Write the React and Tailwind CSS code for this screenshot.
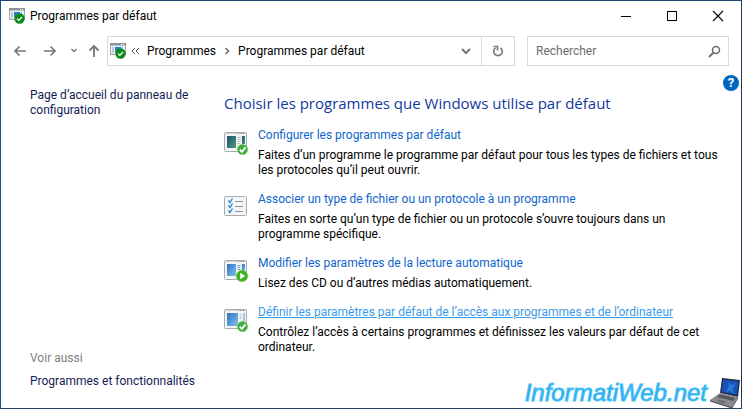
const tasks = [
  {
    icon: 'defaults',
    title: 'Configurer les programmes par défaut',
    lines: [
      'Faites d’un programme le programme par défaut pour tous les types de fichiers et tous',
      'les protocoles qu’il peut ouvrir.',
    ],
  },
  {
    icon: 'associate',
    title: 'Associer un type de fichier ou un protocole à un programme',
    lines: [
      'Faites en sorte qu’un type de fichier ou un protocole s’ouvre toujours dans un',
      'programme spécifique.',
    ],
  },
  {
    icon: 'autoplay',
    title: 'Modifier les paramètres de la lecture automatique',
    lines: ['Lisez des CD ou d’autres médias automatiquement.'],
  },
  {
    icon: 'access',
    title: 'Définir les paramètres par défaut de l’accès aux programmes et de l’ordinateur',
    lines: [
      'Contrôlez l’accès à certains programmes et définissez les valeurs par défaut de cet',
      'ordinateur.',
    ],
    active: true,
  },
];

const AppIcon = () => (
  <svg width="16" height="16" viewBox="0 0 16 16" className="shrink-0" aria-hidden="true">
    <rect x="0.5" y="0.5" width="15" height="11" fill="#eef1f3" stroke="#a2a6a9" />
    <rect x="0" y="0" width="16" height="2.5" fill="#8d9194" />
    <path d="M11 1.5h1M13 1.5h1" stroke="#fff" />
    <rect x="2" y="4" width="2" height="6" fill="#c3c8cc" />
    <rect x="5" y="4" width="6" height="5" fill="#1d83d8" />
    <path d="M7 9l5-5h1v5z" fill="#8cc4ee" />
    <circle cx="10.5" cy="10.5" r="5.2" fill="#0d8a1c" />
    <path d="M8 10.6l1.8 1.8 3.2-3.4" fill="none" stroke="#fff" strokeWidth="1.3" />
  </svg>
);

const CheckBadge = () => (
  <g>
    <circle cx="18.5" cy="17.5" r="5.2" fill="#3fae3c" stroke="#8bd088" strokeWidth="0.6" />
    <path d="M15.8 17.6l2.1 2.2 3.6-4.4" fill="none" stroke="#fff" strokeWidth="1.8" />
  </g>
);

const TaskIcon = ({ name }) => (
  <svg width="24" height="24" viewBox="0 0 24 24" className="mt-1 shrink-0" aria-hidden="true">
    <defs>
      <linearGradient id="teal" x1="0" y1="0" x2="1" y2="1">
        <stop offset="0" stopColor="#1e4f6e" />
        <stop offset="1" stopColor="#4a9f78" />
      </linearGradient>
      <linearGradient id="blue" x1="0" y1="0" x2="1" y2="1">
        <stop offset="0" stopColor="#2c74bf" />
        <stop offset="1" stopColor="#82c0ee" />
      </linearGradient>
    </defs>
    <rect x="0.5" y="0.5" width="22" height="19" rx="1" fill="#f4f5f6" stroke="#a9adb0" />
    {name !== 'associate' && <path d="M1 1.5h21" stroke="#d5d8da" />}
    {name !== 'associate' && <path d="M14 1.5h1M16.5 1.5h1M19 1.5h1" stroke="#7d8285" />}
    {name === 'defaults' && (
      <g>
        <rect x="3" y="4" width="9" height="12" fill="url(#teal)" />
        <path d="M13.5 5.5h3M13.5 7.5h3M13.5 9.5h3M13.5 11.5h2" stroke="#a3b3bf" />
        <rect x="18" y="4" width="3" height="8" fill="url(#teal)" />
        <CheckBadge />
      </g>
    )}
    {name === 'associate' && (
      <g fill="none">
        <path d="M11 5.5h8M11 10.5h8M11 15.5h8" stroke="#8f969c" />
        <path
          d="M4.5 4.5l1.5 2 2.5-4M4.5 9.5l1.5 2 2.5-4M4.5 14.5l1.5 2 2.5-4"
          stroke="#2f86c5"
          strokeWidth="1.3"
        />
      </g>
    )}
    {name === 'autoplay' && (
      <g>
        <rect x="3" y="4" width="9" height="12" fill="url(#blue)" />
        <path d="M13.5 5.5h3M13.5 7.5h3M13.5 9.5h3" stroke="#6b9ac8" />
        <rect x="18" y="4" width="3" height="8" fill="url(#blue)" />
        <circle cx="18" cy="16" r="5.8" fill="#3cb01f" stroke="#86d36b" strokeWidth="0.6" />
        <path d="M16.2 12.8v6.4l5-3.2z" fill="#fff" />
      </g>
    )}
    {name === 'access' && (
      <g>
        <rect x="3" y="4" width="11" height="13" fill="url(#blue)" />
        <path d="M15.5 5.5h2M15.5 7.5h2M15.5 9.5h2" stroke="#b6bcc2" />
        <rect x="19" y="4" width="2" height="8" fill="#a4c8e4" />
        <CheckBadge />
      </g>
    )}
  </svg>
);

const TitleBar = () => (
  <header className="flex h-[30px] items-center pl-[8px] pr-[17px]">
    <AppIcon />
    <h1 className="ml-[5px] flex-1 text-[12px] leading-[15px] text-black">Programmes par défaut</h1>
    <div className="flex items-center gap-[34px]">
      <button type="button" aria-label="Réduire">
        <svg width="12" height="12" viewBox="0 0 12 12" className="block">
          <path d="M1 6.5h10" stroke="#000" />
        </svg>
      </button>
      <button type="button" aria-label="Agrandir">
        <svg width="12" height="12" viewBox="0 0 12 12" className="block">
          <rect x="1.5" y="1.5" width="9" height="9" fill="none" stroke="#000" />
        </svg>
      </button>
      <button type="button" aria-label="Fermer">
        <svg width="12" height="12" viewBox="0 0 12 12" className="block">
          <path d="M1 1l10 10M11 1L1 11" stroke="#000" strokeWidth="1.1" />
        </svg>
      </button>
    </div>
  </header>
);

const NavBar = () => (
  <nav className="mt-[5px] flex h-[30px] items-center pl-[12px] pr-[12px]">
    <div className="flex w-[94px] shrink-0 items-center text-[#777]">
      <button type="button" aria-label="Précédent" className="w-[30px]">
        <svg width="14" height="14" viewBox="0 0 14 14" fill="none" stroke="currentColor" strokeWidth="1.7">
          <path d="M13 7H2M6.5 2.5L2 7l4.5 4.5" />
        </svg>
      </button>
      <button type="button" aria-label="Suivant" className="w-[27px]">
        <svg width="14" height="14" viewBox="0 0 14 14" fill="none" stroke="currentColor" strokeWidth="1.7">
          <path d="M1 7h11M7.5 2.5L12 7l-4.5 4.5" />
        </svg>
      </button>
      <button type="button" aria-label="Emplacements récents" className="w-[17px]">
        <svg width="8" height="8" viewBox="0 0 8 8" fill="none" stroke="currentColor" strokeWidth="1.4">
          <path d="M1.5 2L4 4.5 6.5 2" />
        </svg>
      </button>
      <button type="button" aria-label="Dossier parent">
        <svg width="14" height="14" viewBox="0 0 14 14" fill="none" stroke="currentColor" strokeWidth="1.8">
          <path d="M7 13V2M2.5 6.5L7 2l4.5 4.5" />
        </svg>
      </button>
    </div>

    <div className="flex h-full flex-1 items-center border border-[#d9d9d9]">
      <div className="flex flex-1 items-center pl-[2px] text-[12px] leading-[15px] text-black">
        <AppIcon />
        <svg width="9" height="8" viewBox="0 0 9 8" fill="none" stroke="#555" className="ml-[5px]">
          <path d="M4 1L1 4l3 3M8 1L5 4l3 3" />
        </svg>
        <a href="#programmes" className="ml-[7px]">Programmes</a>
        <svg width="6" height="8" viewBox="0 0 6 8" fill="none" stroke="#555" strokeWidth="1.2" className="mx-[8px]">
          <path d="M1.5 1l3 3-3 3" />
        </svg>
        <a href="#defaut">Programmes par défaut</a>
      </div>
      <button type="button" aria-label="Afficher l’historique" className="flex w-[30px] justify-center text-[#777]">
        <svg width="10" height="8" viewBox="0 0 10 8" fill="none" stroke="currentColor" strokeWidth="2">
          <path d="M1 2l4 4 4-4" />
        </svg>
      </button>
      <button
        type="button"
        aria-label="Actualiser"
        className="flex h-full w-[33px] items-center justify-center border-l border-[#d9d9d9] text-[#777]"
      >
        <svg width="12" height="12" viewBox="0 0 12 12" fill="none" stroke="currentColor" strokeWidth="1.6">
          <path d="M8.5 2.8A4.3 4.3 0 1 1 3.5 2.8" />
          <path d="M1.5 1.5h4V5.500" />
        </svg>
      </button>
    </div>

    <label className="ml-[12px] flex h-full w-[202px] items-center border border-[#d9d9d9] pl-[8px] pr-[7px]">
      <input
        type="text"
        aria-label="Rechercher"
        placeholder="Rechercher"
        className="min-w-0 flex-1 text-[12px] leading-[15px] outline-none placeholder:text-[#6d6d6d]"
      />
      <svg width="13" height="13" viewBox="0 0 13 13" fill="none" stroke="#6d6d6d">
        <circle cx="8" cy="5" r="3.5" strokeWidth="1.5" />
        <path d="M5.5 7.5L1 12" strokeWidth="1.8" />
      </svg>
    </label>
  </nav>
);

const Sidebar = () => (
  <aside className="flex w-[223px] shrink-0 flex-col justify-between pb-[19px] pl-[29px] pt-[22px] text-[12px] leading-[15px]">
    <a href="#accueil" className="text-[#151c55]">
      Page d’accueil du panneau de
      <br />
      configuration
    </a>
    <div className="flex flex-col gap-[8px]">
      <h2 className="text-[#808080]">Voir aussi</h2>
      <a href="#fonctionnalites" className="text-[#151c55]">Programmes et fonctionnalités</a>
    </div>
  </aside>
);

const Laptop = () => (
  <svg width="32" height="32" viewBox="0 0 32 32" className="shrink-0" aria-hidden="true">
    <path d="M13 1l18 2-2 17-18-4z" fill="#222b45" />
    <path d="M14 2.5l15.5 1.7-1.7 13.8L12.5 15z" fill="#1553b5" />
    <path d="M20 5l3 3 4-2-3 6 1 5-4-3-4 1 2-4z" fill="#2f86e8" opacity="0.7" />
    <path d="M11 16l18 4-6 10L1 23z" fill="#8a8a8e" />
    <path d="M11 17.5l15 3.500-2 3-16-4z" fill="#55565c" />
    <path d="M10 22.5l7 2-2 2-7-2z" fill="#6b6c72" />
    <path d="M1 23l22 7v1.5L1 24.500z" fill="#4b4c52" />
    <path d="M29 20l-6 10v1.5l6-10z" fill="#3a3b42" />
  </svg>
);

export default function App() {
  return (
    <div className="relative flex min-h-screen flex-col border border-b-[#1d4668] border-l-[#1c5274] border-r-[#1f3560] border-t-[#1f4872] bg-white font-['Roboto',sans-serif]">
      <TitleBar />
      <NavBar />
      <div className="flex flex-1">
        <Sidebar />
        <main className="min-w-0 flex-1 pt-[26px]">
          <h2 className="font-['Open_Sans',sans-serif] text-[15px] leading-[22px] text-[#0f3a9c]">
            Choisir les programmes que Windows utilise par défaut
          </h2>
          <ul className="mt-[14px] flex flex-col gap-[14px]">
            {tasks.map((task) => (
              <li key={task.icon} className="flex gap-[10px] text-[12px] leading-[15px]">
                <TaskIcon name={task.icon} />
                <div className="flex min-w-0 flex-col gap-[5px] whitespace-nowrap">
                  <a
                    href={`#${task.icon}`}
                    className={task.active ? 'text-[#3c9bea] underline' : 'text-[#0f66cc]'}
                  >
                    {task.title}
                  </a>
                  <p className="text-black">
                    {task.lines.map((line) => (
                      <span key={line} className="block">{line}</span>
                    ))}
                  </p>
                </div>
              </li>
            ))}
          </ul>
        </main>
      </div>

      <button
        type="button"
        aria-label="Aide"
        className="absolute right-[2px] top-[74px] flex size-[16px] items-center justify-center rounded-full bg-[#0067c0] text-[13px] font-bold leading-[16px] text-white"
      >
        ?
      </button>

      {/* Watermark */}
      <div className="absolute -bottom-px right-0 flex items-center gap-[2px]">
        <span className="font-['Liberation_Sans',Arial,sans-serif] text-[24px] italic leading-[28px] text-[#2babee] [-webkit-text-stroke:1px_#45bff6]">
          InformatiWeb.net
        </span>
        <Laptop />
      </div>
    </div>
  );
}
